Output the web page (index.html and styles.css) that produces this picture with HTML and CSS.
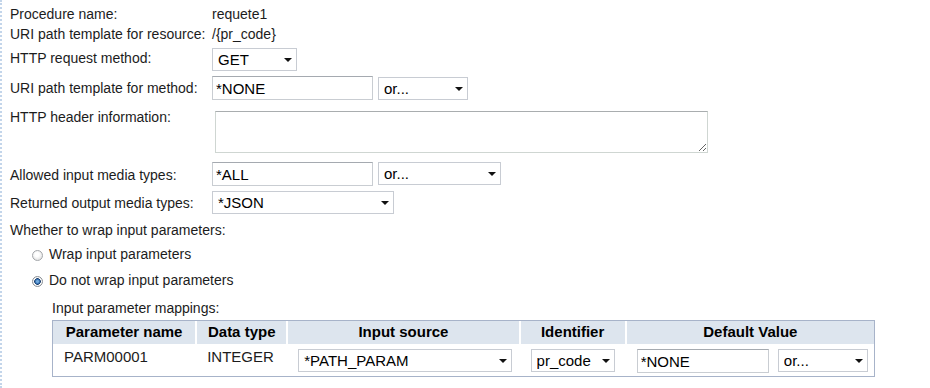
FILE: index.html
```html
<!DOCTYPE html>
<html lang="en">
<head>
    <meta charset="UTF-8">
    <title>REST procedure</title>
    <link rel="stylesheet" href="styles.css">
</head>
<body>
    <div class="page">
        <!-- Resource info -->
        <div class="row r-name">
            <span class="label">Procedure name:</span>
            <span class="value">requete1</span>
        </div>
        <div class="row r-uri">
            <span class="label">URI path template for resource:</span>
            <span class="value">/{pr_code}</span>
        </div>

        <!-- Method -->
        <div class="row r-method">
            <label class="label">HTTP request method:</label>
            <span class="select w-get"><select><option>GET</option></select></span>
        </div>
        <div class="row r-template">
            <label class="label">URI path template for method:</label>
            <input class="text w-text" type="text" value="*NONE">
            <span class="select w-or"><select><option>or...</option></select></span>
        </div>
        <div class="row r-header">
            <label class="label">HTTP header information:</label>
            <textarea class="area"></textarea>
        </div>

        <!-- Media types -->
        <div class="row r-allowed">
            <label class="label">Allowed input media types:</label>
            <input class="text w-text" type="text" value="*ALL">
            <span class="select w-or-wide"><select><option>or...</option></select></span>
        </div>
        <div class="row r-returned">
            <label class="label">Returned output media types:</label>
            <span class="select w-json"><select><option>*JSON</option></select></span>
        </div>

        <!-- Wrapping -->
        <div class="row r-wrap">
            <span class="label wide">Whether to wrap input parameters:</span>
        </div>
        <label class="radio r-radio1">
            <input type="radio" name="wrap">
            <span>Wrap input parameters</span>
        </label>
        <label class="radio r-radio2">
            <input type="radio" name="wrap" checked>
            <span>Do not wrap input parameters</span>
        </label>

        <!-- Mappings -->
        <div class="mappings">
            <div class="mappings-title">Input parameter mappings:</div>
            <table class="grid">
                <colgroup>
                    <col style="width: 142px">
                    <col style="width: 91px">
                    <col style="width: 232px">
                    <col style="width: 106px">
                    <col style="width: 249px">
                </colgroup>
                <thead>
                    <tr>
                        <th>Parameter name</th>
                        <th>Data type</th>
                        <th>Input source</th>
                        <th>Identifier</th>
                        <th>Default Value</th>
                    </tr>
                </thead>
                <tbody>
                    <tr>
                        <td class="first">PARM00001</td>
                        <td>INTEGER</td>
                        <td><span class="select w-source"><select><option>*PATH_PARAM</option></select></span></td>
                        <td><span class="select w-ident"><select><option>pr_code</option></select></span></td>
                        <td>
                            <input class="text w-default" type="text" value="*NONE">
                            <span class="select w-or"><select><option>or...</option></select></span>
                        </td>
                    </tr>
                </tbody>
            </table>
        </div>
    </div>
</body>
</html>
```

FILE: styles.css
```css
/* Base */
body {
    margin: 0;
    background-color: #fff;
    font-family: "Liberation Sans", Arial, sans-serif;
    font-size: 14px;
    line-height: 17px;
    color: #1c1c1c;
}
.page {
    height: 388px;
    box-sizing: border-box;
    border-left: 2px dotted #c3d5ea;
    padding: 6px 0 0 8px;
}

/* Label / field rows */
.row {
    display: flex;
    align-items: flex-start;
}
.label {
    width: 202px;
    flex-shrink: 0;
}
.label.wide {
    width: auto;
}
.r-uri { margin-top: 3px; }
.r-method { margin-top: 5px; }
.r-method .label { padding-top: 2px; }
.r-template { margin-top: 5px; }
.r-template .label { padding-top: 4px; }
.r-template .select { margin-top: 1px; }
.r-header { margin-top: 9px; }
.r-allowed { margin-top: 9px; }
.r-allowed .label { padding-top: 5px; }
.r-returned { margin-top: 5px; }
.r-returned .label { padding-top: 4px; }
.r-wrap { margin-top: 8px; }

/* Form controls */
.text {
    box-sizing: border-box;
    height: 24px;
    margin: 0;
    padding: 1px 3px 0;
    border: 1px solid #c9cdd2;
    border-top-color: #a5aab0;
    font-family: inherit;
    font-size: 15px;
    color: #000;
    outline: none;
}
.w-text { width: 161px; margin-right: 5px; }
.w-default { width: 132px; margin-right: 5px; }

.area {
    box-sizing: border-box;
    width: 493px;
    height: 42px;
    margin: 2px 0 0 3px;
    border: 1px solid #cfd6d2;
    border-top-color: #a9adaf;
    font-family: inherit;
}

.select {
    position: relative;
    display: inline-block;
    vertical-align: top;
}
.select select {
    box-sizing: border-box;
    width: 100%;
    height: 23px;
    margin: 0;
    padding: 0 16px 0 5px;
    border: 1px solid #c8ccd3;
    border-radius: 0;
    background-color: #fff;
    font-family: inherit;
    font-size: 15px;
    color: #000;
    -webkit-appearance: none;
    appearance: none;
}
.select::after {
    content: "";
    position: absolute;
    right: 5px;
    top: 10px;
    border-left: 4px solid transparent;
    border-right: 4px solid transparent;
    border-top: 4px solid #111;
    pointer-events: none;
}
.w-get { width: 85px; }
.w-or { width: 90px; }
.w-or-wide { width: 123px; }
.w-json { width: 182px; }
.w-source { width: 214px; }
.w-ident { width: 84px; }

/* Radio buttons */
.radio {
    display: flex;
    align-items: center;
    padding-left: 22px;
}
.r-radio1 { margin-top: 7px; }
.r-radio2 { margin-top: 9px; }
.radio input {
    -webkit-appearance: none;
    appearance: none;
    width: 11px;
    height: 11px;
    margin: 1px 6px 0 0;
    border: 1px solid #a3a6aa;
    border-radius: 50%;
    background: radial-gradient(circle at 45% 40%, #fff 0 2px, #e8e8e8 5px);
}
.radio input:checked {
    border-color: #8b9096;
    background: radial-gradient(circle at 50% 50%, #6fa8dc 0 1px, #245d9e 2.5px, #1c3f6e 3px, #fff 3.6px, #e6e6e6 5px);
}

/* Mappings table */
.mappings {
    margin: 11px 0 0 42px;
}
.mappings-title {
    margin-bottom: 3px;
}
.grid {
    width: 823px;
    table-layout: fixed;
    border: 1px solid #a7b3c9;
    border-collapse: separate;
    border-spacing: 0;
    font-size: 15px;
    line-height: 18px;
}
.grid th {
    padding: 2px 0 3px;
    background-color: #dde5ee;
    border-left: 2px solid #fff;
    font-weight: bold;
    color: #000;
    text-align: center;
}
.grid th:first-child {
    border-left: none;
}
.grid td {
    padding: 4px 0 3px 10px;
    border-left: 2px solid transparent;
    vertical-align: top;
    white-space: nowrap;
}
.grid td.first {
    padding-left: 11px;
    border-left: none;
}
.grid td .select,
.grid td .text {
    margin-top: 1px;
}
```
